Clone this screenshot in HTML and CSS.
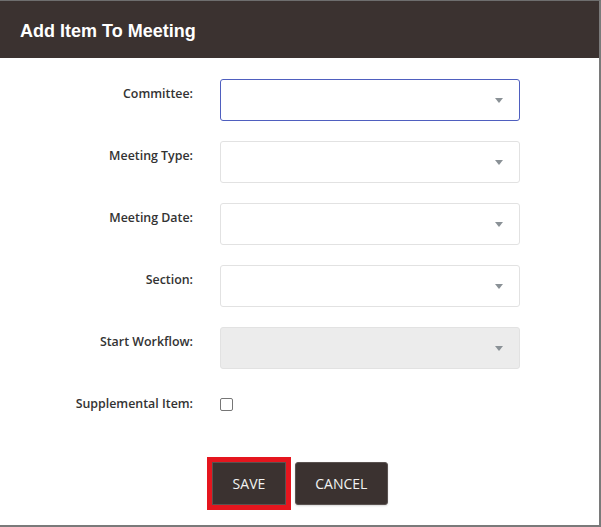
FILE: index.html
```html
<!DOCTYPE html>
<html>
<head>
<meta charset="utf-8">
<link rel="stylesheet" href="styles.css">
</head>
<body>
<div class="dialog">
  <div class="header">Add Item To Meeting</div>
  <div class="form">
    <div class="row">
      <label class="label">Committee:</label>
      <div class="select focused"><span class="arrow"></span></div>
    </div>
    <div class="row">
      <label class="label">Meeting Type:</label>
      <div class="select"><span class="arrow"></span></div>
    </div>
    <div class="row">
      <label class="label">Meeting Date:</label>
      <div class="select"><span class="arrow"></span></div>
    </div>
    <div class="row">
      <label class="label">Section:</label>
      <div class="select"><span class="arrow"></span></div>
    </div>
    <div class="row">
      <label class="label">Start Workflow:</label>
      <div class="select disabled"><span class="arrow"></span></div>
    </div>
    <div class="row">
      <label class="label">Supplemental Item:</label>
      <div class="checkcell"><span class="checkbox"></span></div>
    </div>
  </div>
  <div class="actions">
    <button class="btn save">SAVE</button>
    <button class="btn">CANCEL</button>
  </div>
</div>
</body>
</html>
```
FILE: styles.css
```css
html, body {
  margin: 0;
  padding: 0;
  background: #ffffff;
}
.dialog {
  box-sizing: border-box;
  width: 601px;
  height: 527px;
  border-top: 1px solid #6e6e6e;
  border-right: 2px solid #7a7a7a;
  border-bottom: 2px solid #7a7a7a;
  background: #fff;
  display: flex;
  flex-direction: column;
}
.header {
  box-sizing: border-box;
  height: 57px;
  background: #3b3230;
  color: #ffffff;
  font-family: "Liberation Sans", Arial, sans-serif;
  font-weight: bold;
  font-size: 18px;
  line-height: 57px;
  padding-top: 2px;
  padding-left: 20px;
}
.form {
  padding-top: 21px;
  display: flex;
  flex-direction: column;
  gap: 20px;
}
.row {
  display: grid;
  grid-template-columns: 193px 300px;
  column-gap: 27px;
  align-items: start;
}
.label {
  text-align: right;
  font-family: "Open Sans", sans-serif;
  font-weight: 600;
  font-size: 12.4px;
  line-height: 16px;
  padding-top: 7px;
  color: #333;
}
.select {
  box-sizing: border-box;
  height: 42px;
  border: 1px solid #e2e2e2;
  border-radius: 3px;
  background: #fff;
  position: relative;
}
.select.focused {
  border-color: #4f5fbf;
}
.select.disabled {
  background: #ececec;
}
.arrow {
  position: absolute;
  right: 16px;
  top: 18px;
  width: 0;
  height: 0;
  border-left: 4px solid transparent;
  border-right: 4px solid transparent;
  border-top: 5px solid #8a9196;
}
.checkcell {
  padding-top: 9px;
}
.checkbox {
  display: block;
  box-sizing: border-box;
  width: 13px;
  height: 13px;
  border: 1px solid #767676;
  border-radius: 2px;
  background: #fff;
}
.actions {
  margin-top: 50px;
  display: flex;
  justify-content: center;
  gap: 9px;
  padding-left: 1px;
}
.btn {
  box-sizing: border-box;
  height: 43px;
  padding: 0 19.5px;
  background: #3b3230;
  color: #f2f2f2;
  border: 1px solid #5a5250;
  border-radius: 3px;
  font-family: "Open Sans", sans-serif;
  font-size: 14px;
  box-shadow: 0 1px 2px rgba(0,0,0,0.15);
}
.btn.save {
  outline: 5px solid #e5161e;
  border-radius: 0;
}
```
